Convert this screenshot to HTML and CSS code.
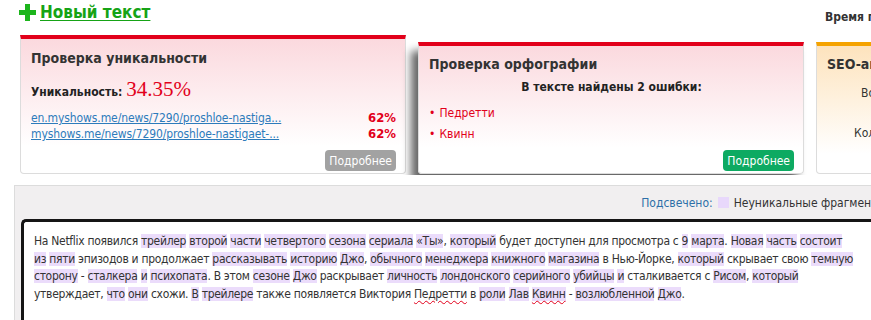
FILE: index.html
```html
<!DOCTYPE html>
<html lang="ru">
<head>
  <meta charset="UTF-8" />
  <title>Проверка текста</title>
  <link rel="stylesheet" href="styles.css">
</head>
<body>
  <div class="top">
    <a href="#" class="new-text">
      <svg class="plus" width="17" height="17" viewBox="0 0 17 17"><path d="M6 0h5v6h6v5h-6v6H6v-6H0V6h6z" fill="#1cb51c"/></svg>
      <span>Новый текст</span>
    </a>
    <div class="time">Время проверки: 12 сек.</div>
  </div>

  <div class="cards">
    <div class="card red">
      <h2>Проверка уникальности</h2>
      <div class="uniq">Уникальность: <span class="uniq-value">34.35%</span></div>
      <div class="source"><a href="#">en.myshows.me/news/7290/proshloe-nastiga...</a><span class="pct">62%</span></div>
      <div class="source"><a href="#">myshows.me/news/7290/proshloe-nastigaet-...</a><span class="pct">62%</span></div>
      <button class="btn grey">Подробнее</button>
    </div>

    <div class="card red active">
      <h2>Проверка орфографии</h2>
      <div class="errors-title">В тексте найдены 2 ошибки:</div>
      <ul class="errors">
        <li>Педретти</li>
        <li>Квинн</li>
      </ul>
      <button class="btn green">Подробнее</button>
    </div>

    <div class="card orange">
      <h2>SEO-анализ текста</h2>
      <div class="seo-row">Водность: 12%</div>
      <div class="seo-row seo-gap">Количество символов</div>
    </div>
  </div>

  <div class="result">
    <div class="legend">
      <span class="legend-label">Подсвечено:</span>
      <span class="swatch"></span>
      <span>Неуникальные фрагменты</span>
    </div>
    <div class="text-box">
      На Netflix появился <mark>трейлер</mark> <mark>второй</mark> <mark>части</mark> <mark>четвертого</mark> <mark>сезона</mark> <mark>сериала</mark> <mark>«Ты»</mark>, <mark>который</mark> будет доступен для просмотра с <mark>9</mark> <mark>марта</mark>. <mark>Новая</mark> <mark>часть</mark> <mark>состоит</mark><br>
      <mark>из</mark> <mark>пяти</mark> эпизодов и продолжает <mark>рассказывать</mark> <mark>историю</mark> <mark>Джо</mark>, <mark>обычного</mark> <mark>менеджера</mark> <mark>книжного</mark> <mark>магазина</mark> в Нью-Йорке, <mark>который</mark> скрывает свою <mark>темную</mark><br>
      <mark>сторону</mark> - <mark>сталкера</mark> <mark>и</mark> <mark>психопата</mark>. В этом <mark>сезоне</mark> <mark>Джо</mark> раскрывает <mark>личность</mark> <mark>лондонского</mark> <mark>серийного</mark> <mark>убийцы</mark> <mark>и</mark> сталкивается с <mark>Рисом</mark>, <mark>который</mark><br>
      утверждает, <mark>что</mark> <mark>они</mark> схожи. <mark>В</mark> <mark>трейлере</mark> также появляется Виктория <span class="typo">Педретти</span> в <mark>роли</mark> <mark>Лав</mark> <mark><span class="typo">Квинн</span></mark> - <mark>возлюбленной</mark> <mark>Джо</mark>.
    </div>
  </div>
</body>
</html>
```

FILE: styles.css
```css
* {
  box-sizing: border-box;
}

body {
  margin: 0;
  width: 871px;
  height: 320px;
  overflow: hidden;
  background: #fff;
  color: #333;
  font-family: "DejaVu Sans Condensed", "DejaVu Sans", sans-serif;
  font-stretch: condensed;
  font-size: 13px;
}

/* Header */
.top {
  display: flex;
  align-items: flex-start;
  height: 35px;
  padding: 2px 0 0 19px;
}

.new-text {
  display: flex;
  align-items: center;
  gap: 4px;
  color: #16a316;
  font-size: 17px;
  font-weight: bold;
  text-decoration: none;
}

.new-text span {
  text-decoration: underline;
  text-underline-offset: 2px;
}

.plus {
  flex: none;
}

.time {
  margin-left: auto;
  width: 46px;
  padding-top: 8px;
  white-space: nowrap;
  font-size: 12px;
  font-weight: bold;
  color: #333;
}

/* Cards */
.cards {
  display: flex;
  gap: 12px;
  height: 140px;
  padding-left: 20px;
  overflow: hidden;
  align-items: flex-start;
}

.card {
  flex: none;
  display: flex;
  flex-direction: column;
  width: 386px;
  height: 139px;
  padding: 10px 9px 2px 10px;
  border: 1px solid #dcdcdc;
  border-top: 4px solid #e2001a;
  border-radius: 0 0 4px 4px;
}

.card.red {
  background: linear-gradient(#fbd9de, #fff 80%);
}

.card.active {
  margin-top: 7px;
  height: 132px;
  padding-top: 9px;
  box-shadow: -7px 9px 9px rgba(0, 0, 0, 0.6);
}

.card.orange {
  margin-top: 7px;
  height: 132px;
  padding-top: 9px;
  border-top-color: #f5a300;
  background: linear-gradient(#fde3bd, #fff 85%);
}

.card h2 {
  margin: 0;
  font-size: 14px;
  line-height: 18px;
  color: #333;
}

.uniq {
  margin-top: 11px;
  font-size: 12px;
  font-weight: bold;
  color: #222;
  line-height: 22px;
}

.uniq-value {
  font-family: "Liberation Serif", serif;
  font-size: 21px;
  font-weight: normal;
  color: #e2001a;
}

.source {
  display: flex;
  justify-content: space-between;
  font-size: 12px;
  letter-spacing: -0.1px;
  line-height: 16px;
}

.uniq + .source {
  margin-top: 7px;
}

.source a {
  color: #2d7bbb;
}

.pct {
  color: #e2001a;
  font-weight: bold;
  font-size: 13px;
  letter-spacing: 0;
}

.btn {
  margin-top: auto;
  align-self: flex-end;
  height: 21px;
  padding: 0 4px;
  border: none;
  border-radius: 4px;
  color: #fff;
  font-family: inherit;
  font-stretch: condensed;
  font-size: 12px;
}

.btn.grey {
  background: #a2a2a2;
}

.btn.green {
  background: #0daa62;
}

.errors-title {
  margin-top: 6px;
  text-align: center;
  font-size: 12px;
  font-weight: bold;
  color: #222;
  line-height: 16px;
}

.errors {
  margin: 8px 0 0;
  padding: 0;
  list-style: none;
}

.errors li {
  color: #e2001a;
  font-size: 12px;
  line-height: 21px;
}

.errors li::before {
  content: "•";
  margin-right: 4px;
}

.seo-row {
  margin-top: 13px;
  padding-left: 34px;
  white-space: nowrap;
  font-size: 12px;
  color: #333;
}

.seo-gap {
  margin-top: 26px;
  padding-left: 27px;
}

/* Result */
.result {
  margin: 10px 0 0 14px;
  padding-left: 6px;
  background: #f1eff0;
  border-top: 1px solid #dcdcdc;
  border-left: 1px solid #dcdcdc;
}

.legend {
  display: flex;
  align-items: center;
  justify-content: flex-end;
  gap: 5px;
  height: 33px;
  white-space: nowrap;
  font-size: 12px;
  margin-right: -15px;
}

.legend-label {
  color: #2d6fa8;
}

.swatch {
  width: 11px;
  height: 11px;
  background: #e8d8fb;
}

.text-box {
  height: 110px;
  padding: 11px 10px;
  background: #fff;
  border-top: 3px solid #151515;
  border-left: 3px solid #151515;
  border-radius: 5px 0 0 0;
  white-space: nowrap;
  font-size: 12px;
  letter-spacing: -0.3px;
  line-height: 17.5px;
  color: #333;
}

mark {
  background: #ebdcfb;
  color: inherit;
}

.typo {
  text-decoration: underline wavy #e2001a;
  text-decoration-thickness: 1px;
  text-underline-offset: 2px;
}
```
